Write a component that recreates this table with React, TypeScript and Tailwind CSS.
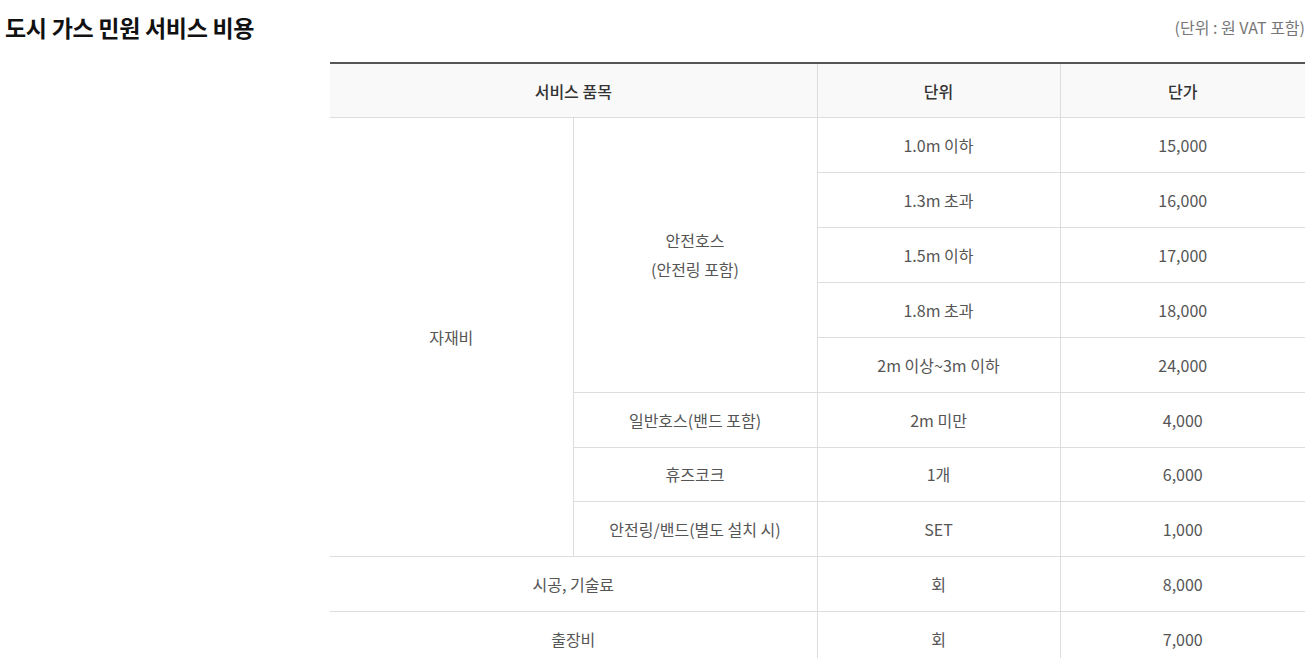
import React from "react";

const font = { fontFamily: '"Noto Sans CJK KR", "Noto Sans", sans-serif' };

const td = "border border-[#dddddd] text-center align-middle text-[16px] text-[#555555] h-[54.9px] p-0";
const th = "border-b border-[#dddddd] h-[54.67px] text-[16px] font-medium text-[#333333] border-t-2 border-t-[#555555]";

export default function App() {
  return (
    <div className="w-[1311px] h-[658px] bg-white overflow-hidden" style={font}>
      <div className="flex items-center justify-between h-[54px] pl-[5px] pr-[6px]">
        <h2 className="text-[23px] font-bold text-[#111111] tracking-[-0.3px]">도시 가스 민원 서비스 비용</h2>
        <span className="text-[16px] text-[#777777]">(단위 : 원 VAT 포함)</span>
      </div>
      <div className="pl-[330px] pr-[6px] pt-[8px]">
        <table className="w-[975px] border-collapse table-fixed border-t-2 border-t-[#555555]">
          <colgroup>
            <col className="w-[243px]" />
            <col className="w-[244px]" />
            <col className="w-[243px]" />
            <col className="w-[245px]" />
          </colgroup>
          <thead>
            <tr className="bg-[#f9f9f9]">
              <th colSpan={2} className={th + " border-r"}>서비스 품목</th>
              <th className={th + " border-r"}>단위</th>
              <th className={th}>단가</th>
            </tr>
          </thead>
          <tbody>
            <tr>
              <td rowSpan={8} className={td + " border-l-0"}>자재비</td>
              <td rowSpan={5} className={td + " leading-[29px]"}>안전호스<br />(안전링 포함)</td>
              <td className={td}>1.0m 이하</td>
              <td className={td + " border-r-0"}>15,000</td>
            </tr>
            <tr>
              <td className={td}>1.3m 초과</td>
              <td className={td + " border-r-0"}>16,000</td>
            </tr>
            <tr>
              <td className={td}>1.5m 이하</td>
              <td className={td + " border-r-0"}>17,000</td>
            </tr>
            <tr>
              <td className={td}>1.8m 초과</td>
              <td className={td + " border-r-0"}>18,000</td>
            </tr>
            <tr>
              <td className={td}>2m 이상~3m 이하</td>
              <td className={td + " border-r-0"}>24,000</td>
            </tr>
            <tr>
              <td className={td}>일반호스(밴드 포함)</td>
              <td className={td}>2m 미만</td>
              <td className={td + " border-r-0"}>4,000</td>
            </tr>
            <tr>
              <td className={td}>휴즈코크</td>
              <td className={td}>1개</td>
              <td className={td + " border-r-0"}>6,000</td>
            </tr>
            <tr>
              <td className={td}>안전링/밴드(별도 설치 시)</td>
              <td className={td}>SET</td>
              <td className={td + " border-r-0"}>1,000</td>
            </tr>
            <tr>
              <td colSpan={2} className={td + " border-l-0"}>시공, 기술료</td>
              <td className={td}>회</td>
              <td className={td + " border-r-0"}>8,000</td>
            </tr>
            <tr>
              <td colSpan={2} className={td + " border-l-0"}>출장비</td>
              <td className={td}>회</td>
              <td className={td + " border-r-0"}>7,000</td>
            </tr>
          </tbody>
        </table>
      </div>
    </div>
  );
}
